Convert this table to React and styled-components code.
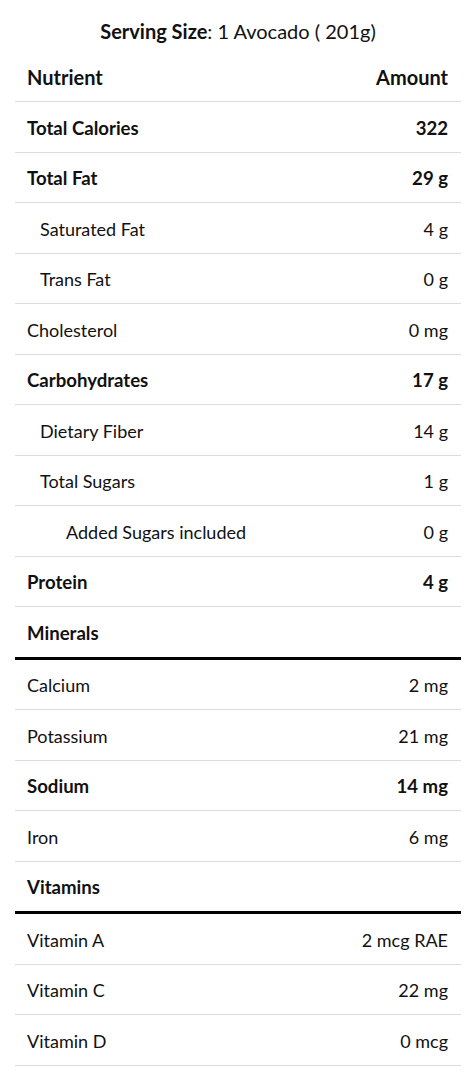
import React from 'react'
import styled, { createGlobalStyle } from 'styled-components'

const GlobalStyle = createGlobalStyle`
  body {
    margin: 0;
    background: #ffffff;
    font-family: 'Lato', 'Open Sans', sans-serif;
    color: #111111;
  }
`

const Page = styled.div`
  padding: 0 12px 0 15px;
`

const Title = styled.h2`
  margin: 0;
  height: 51px;
  display: flex;
  align-items: center;
  justify-content: center;
  padding-top: 13px;
  padding-bottom: 2px;
  box-sizing: border-box;
  font-size: 20px;
  font-weight: 400;
  text-align: center;

  b {
    font-weight: 700;
  }
`

const Table = styled.div`
  display: flex;
  flex-direction: column;
`

const Row = styled.div`
  display: flex;
  justify-content: space-between;
  align-items: center;
  height: 49.5px;
  padding: 2px 13px 0 12px;
  box-sizing: content-box;
  height: 47.5px;
  border-bottom: ${p => (p.$thick ? '3px solid #000000' : '1px solid #dcdcdc')};
  font-size: ${p => (p.$bold ? '18.6px' : '18px')};
  font-weight: ${p => (p.$bold ? 700 : 400)};
`

const Name = styled.span`
  padding-left: ${p => p.$indent * 13}px;
`

const Value = styled.span`
  text-align: right;
`

const HeaderRow = styled(Row)`
  font-size: 20px;
  font-weight: 700;
  height: 48px;
`

const rows = [
  { name: 'Total Calories', value: '322', bold: true },
  { name: 'Total Fat', value: '29 g', bold: true },
  { name: 'Saturated Fat', value: '4 g', indent: 1 },
  { name: 'Trans Fat', value: '0 g', indent: 1 },
  { name: 'Cholesterol', value: '0 mg' },
  { name: 'Carbohydrates', value: '17 g', bold: true },
  { name: 'Dietary Fiber', value: '14 g', indent: 1 },
  { name: 'Total Sugars', value: '1 g', indent: 1 },
  { name: 'Added Sugars included', value: '0 g', indent: 3 },
  { name: 'Protein', value: '4 g', bold: true },
  { name: 'Minerals', value: '', bold: true, thick: true },
  { name: 'Calcium', value: '2 mg' },
  { name: 'Potassium', value: '21 mg' },
  { name: 'Sodium', value: '14 mg', bold: true },
  { name: 'Iron', value: '6 mg' },
  { name: 'Vitamins', value: '', bold: true, thick: true },
  { name: 'Vitamin A', value: '2 mcg RAE' },
  { name: 'Vitamin C', value: '22 mg' },
  { name: 'Vitamin D', value: '0 mcg' },
]

export default function App() {
  return (
    <>
      <GlobalStyle />
      <Page>
        <Title>
          <b>Serving Size</b>: 1 Avocado ( 201g)
        </Title>
        <Table>
          <HeaderRow $bold>
            <span>Nutrient</span>
            <span>Amount</span>
          </HeaderRow>
          {rows.map(r => (
            <Row key={r.name} $bold={r.bold} $thick={r.thick}>
              <Name $indent={r.indent || 0}>{r.name}</Name>
              <Value>{r.value}</Value>
            </Row>
          ))}
        </Table>
      </Page>
    </>
  )
}
